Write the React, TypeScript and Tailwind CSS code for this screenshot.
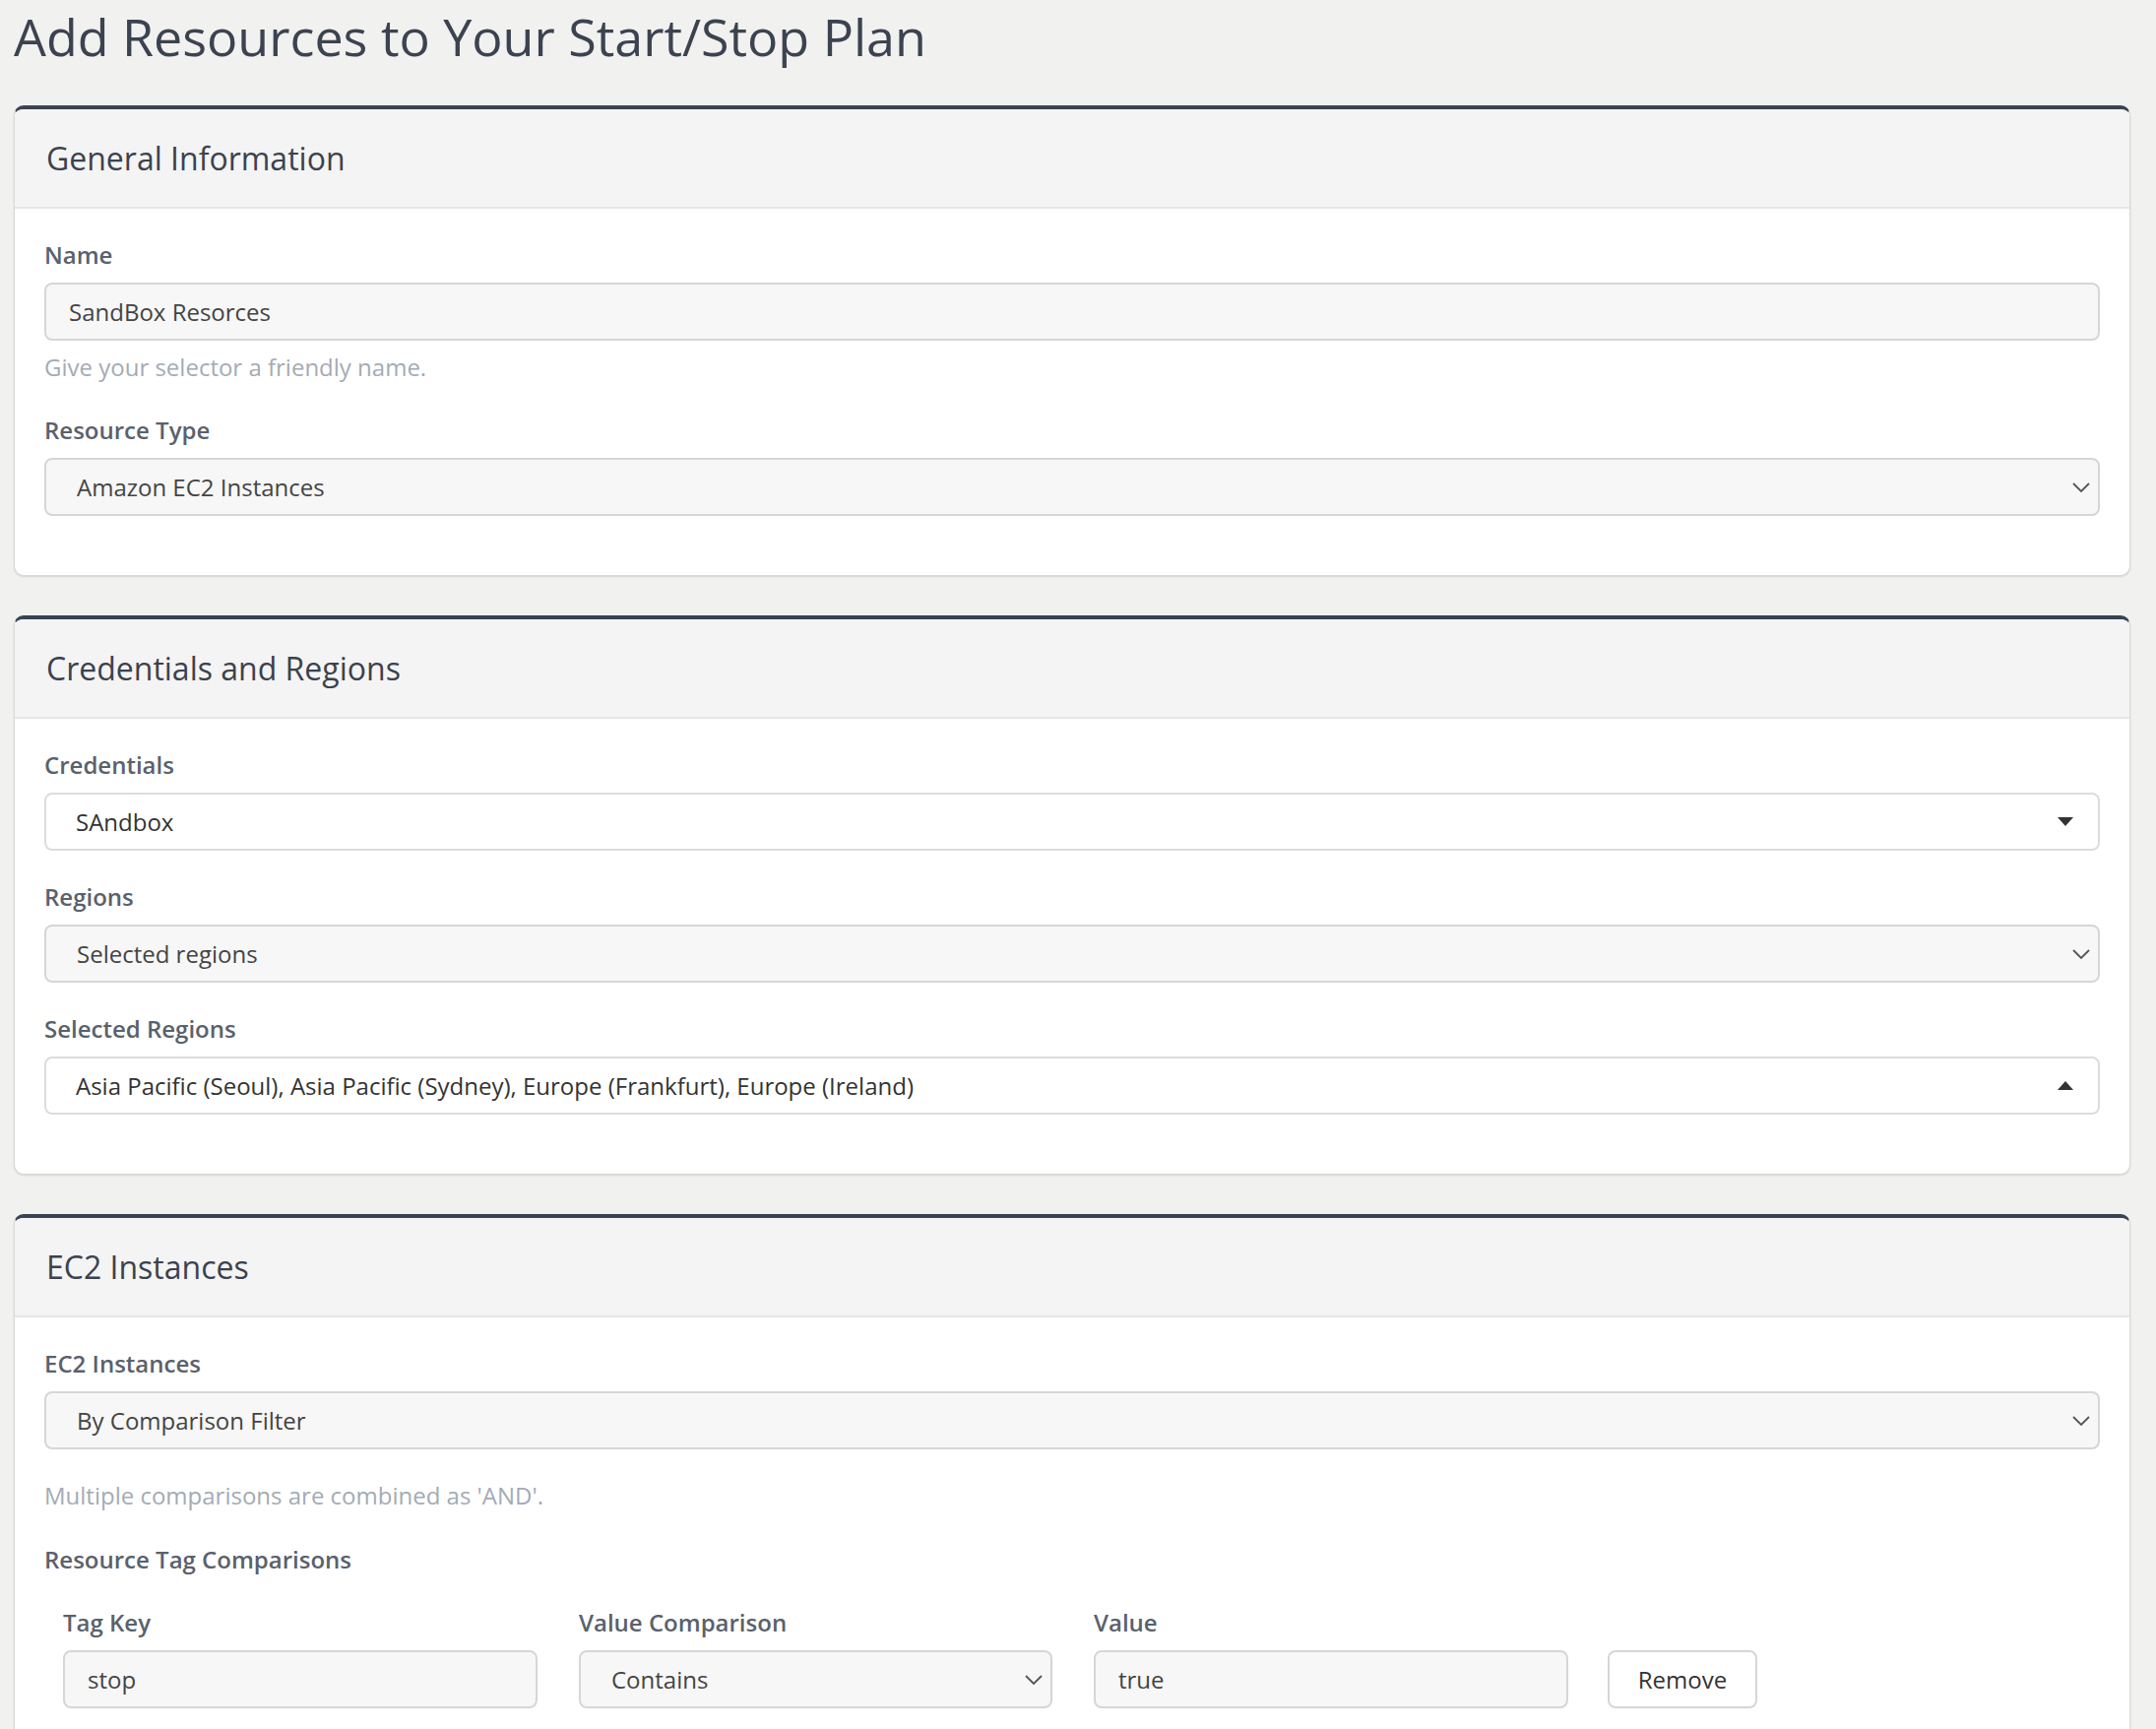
import React from 'react';

const font = { fontFamily: '"Open Sans", "Noto Sans", "Liberation Sans", sans-serif' };

const Chevron: React.FC = () => (
  <svg width="18" height="10" viewBox="0 0 18 10" className="shrink-0">
    <polyline points="1,1 9,9 17,1" fill="none" stroke="#555" strokeWidth="1.8" />
  </svg>
);

const Caret: React.FC<{ up?: boolean }> = ({ up }) => (
  <svg width="16" height="9" viewBox="0 0 16 9" className="shrink-0">
    {up ? <polygon points="0,9 8,0 16,9" fill="#333" /> : <polygon points="0,0 16,0 8,9" fill="#333" />}
  </svg>
);

const Label: React.FC<{ children: React.ReactNode }> = ({ children }) => (
  <div className="text-[24px] leading-[32px] font-semibold text-[#5a616d]">{children}</div>
);

const Help: React.FC<{ children: React.ReactNode }> = ({ children }) => (
  <div className="text-[24px] leading-[32px] text-[#a4abb5]">{children}</div>
);

const TextBox: React.FC<{ value: string }> = ({ value }) => (
  <input
    readOnly
    value={value}
    style={font}
    className="h-[59px] w-full rounded-[8px] border-2 border-[#d6d6d6] bg-[#f7f7f7] px-[23px] text-[24px] text-[#444] outline-none"
  />
);

// native style select with thin chevron
const NativeSelect: React.FC<{ value: string }> = ({ value }) => (
  <div className="flex h-[59px] w-full items-center justify-between rounded-[8px] border-2 border-[#d6d6d6] bg-[#f7f7f7] pl-[31px] pr-[8px] text-[24px] text-[#444]">
    <span>{value}</span>
    <Chevron />
  </div>
);

// searchable dropdown with filled caret
const DropSelect: React.FC<{ value: string; up?: boolean }> = ({ value, up }) => (
  <div className="flex h-[59px] w-full items-center justify-between rounded-[8px] border-2 border-[#dcdcdc] bg-white pl-[30px] pr-[25px] text-[24px] text-[#333]">
    <span>{value}</span>
    <Caret up={up} />
  </div>
);

const Card: React.FC<{ title: string; children: React.ReactNode }> = ({ title, children }) => (
  <div className="overflow-hidden rounded-[10px] border border-[#d9d9d9] border-t-[4px] border-t-[#3a4351] bg-white shadow-[0_1px_2px_rgba(0,0,0,0.12)]">
    <div className="flex h-[101px] items-center border-b-2 border-[#e6e6e6] bg-[#f4f4f4] px-[32px]">
      <h2 className="text-[32px] font-normal text-[#3b424e]">{title}</h2>
    </div>
    <div className="px-[30px] pb-[60px] pt-[31px]">{children}</div>
  </div>
);

const Field: React.FC<{ label: string; children: React.ReactNode }> = ({ label, children }) => (
  <div className="flex flex-col gap-[12px]">
    <Label>{label}</Label>
    {children}
  </div>
);

export default function App() {
  return (
    <div style={font} className="min-h-screen bg-[#f1f1f0] px-[14px] pt-[6px] pb-[40px]">
      <h1 className="text-[52px] leading-[62px] font-normal text-[#3c4350]">Add Resources to Your Start/Stop Plan</h1>

      <div className="mt-[39px] flex w-[2150px] flex-col gap-[40px]">
        <Card title="General Information">
          <Field label="Name">
            <TextBox value="SandBox Resorces" />
          </Field>
          <div className="mt-[11px]">
            <Help>Give your selector a friendly name.</Help>
          </div>
          <div className="mt-[32px]">
            <Field label="Resource Type">
              <NativeSelect value="Amazon EC2 Instances" />
            </Field>
          </div>
        </Card>

        <Card title="Credentials and Regions">
          <div className="flex flex-col gap-[31px]">
            <Field label="Credentials">
              <DropSelect value="SAndbox" />
            </Field>
            <Field label="Regions">
              <NativeSelect value="Selected regions" />
            </Field>
            <Field label="Selected Regions">
              <DropSelect value="Asia Pacific (Seoul), Asia Pacific (Sydney), Europe (Frankfurt), Europe (Ireland)" up />
            </Field>
          </div>
        </Card>

        <Card title="EC2 Instances">
          <Field label="EC2 Instances">
            <NativeSelect value="By Comparison Filter" />
          </Field>
          <div className="mt-[31px]">
            <Help>Multiple comparisons are combined as 'AND'.</Help>
          </div>
          <div className="mt-[33px]">
            <Label>Resource Tag Comparisons</Label>
          </div>
          <div className="mt-[32px] flex items-end gap-[42px] pl-[19px]">
            <div className="w-[482px]">
              <Field label="Tag Key">
                <TextBox value="stop" />
              </Field>
            </div>
            <div className="w-[481px]">
              <Field label="Value Comparison">
                <NativeSelect value="Contains" />
              </Field>
            </div>
            <div className="w-[482px]">
              <Field label="Value">
                <TextBox value="true" />
              </Field>
            </div>
            <button className="-ml-[2px] h-[59px] w-[152px] rounded-[8px] border-2 border-[#d6d6d6] bg-white text-[24px] text-[#333]">
              Remove
            </button>
          </div>
          <div className="h-[40px]" />
        </Card>
      </div>
    </div>
  );
}
